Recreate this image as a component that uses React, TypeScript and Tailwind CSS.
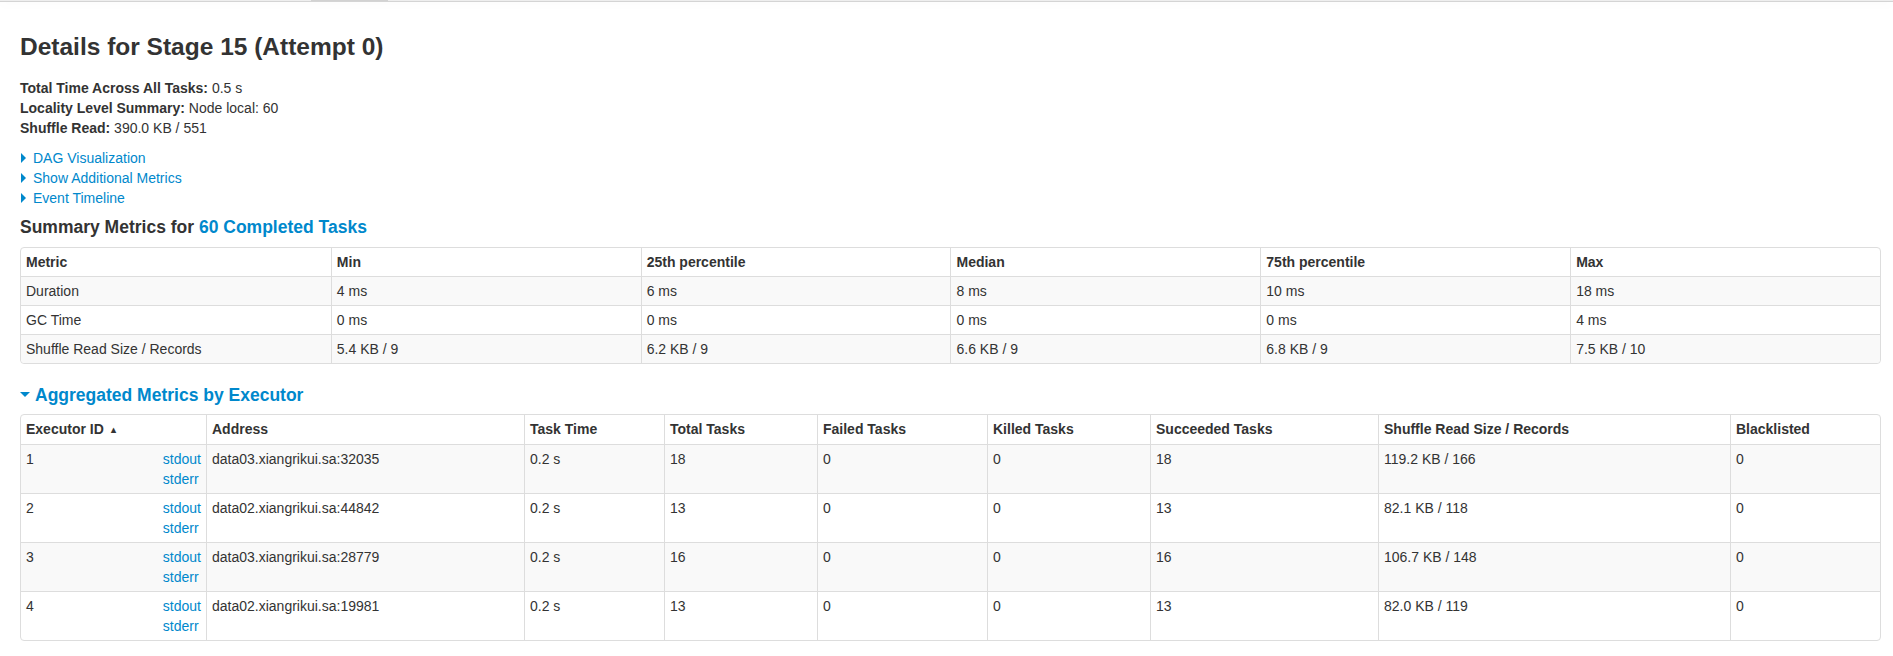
import React from 'react';

const summaryRows = [
  ['Duration', '4 ms', '6 ms', '8 ms', '10 ms', '18 ms'],
  ['GC Time', '0 ms', '0 ms', '0 ms', '0 ms', '4 ms'],
  ['Shuffle Read Size / Records', '5.4 KB / 9', '6.2 KB / 9', '6.6 KB / 9', '6.8 KB / 9', '7.5 KB / 10'],
];

const executors = [
  { id: '1', address: 'data03.xiangrikui.sa:32035', taskTime: '0.2 s', total: '18', failed: '0', killed: '0', succeeded: '18', shuffle: '119.2 KB / 166', blacklisted: '0' },
  { id: '2', address: 'data02.xiangrikui.sa:44842', taskTime: '0.2 s', total: '13', failed: '0', killed: '0', succeeded: '13', shuffle: '82.1 KB / 118', blacklisted: '0' },
  { id: '3', address: 'data03.xiangrikui.sa:28779', taskTime: '0.2 s', total: '16', failed: '0', killed: '0', succeeded: '16', shuffle: '106.7 KB / 148', blacklisted: '0' },
  { id: '4', address: 'data02.xiangrikui.sa:19981', taskTime: '0.2 s', total: '13', failed: '0', killed: '0', succeeded: '13', shuffle: '82.0 KB / 119', blacklisted: '0' },
];

// bootstrap-ish bordered + striped table cell
const cell = 'border-l border-t border-[#ddd] first:border-l-0 px-[5px] py-[4px] text-left align-top leading-[20px]';
const headCell = 'border-l border-[#ddd] first:border-l-0 px-[5px] py-[4px] text-left align-top leading-[20px] font-bold';
const tableCls =
  'w-full table-fixed border-separate border-spacing-0 border border-[#ddd] rounded-[4px] [&_tbody_tr:nth-child(odd)_td]:bg-[#f9f9f9] [&_tbody_tr:last-child_td:first-child]:rounded-bl-[4px] [&_tbody_tr:last-child_td:last-child]:rounded-br-[4px]';

function ArrowClosed() {
  return <span className="inline-block w-0 h-0 border-y-[5px] border-y-transparent border-l-[5px] border-l-[#0088cc] align-[-1px]" />;
}

function ArrowOpen() {
  return <span className="inline-block w-0 h-0 border-x-[5px] border-x-transparent border-t-[5px] border-t-[#0088cc] mb-[2px]" />;
}

export default function App() {
  return (
    <div className="min-h-[656px] bg-white text-[#333] text-[14px] leading-[20px]" style={{ fontFamily: '"Liberation Sans", Arial, Helvetica, sans-serif' }}>
      {/* navbar bottom edge */}
      <div className="shadow-[0_2px_10px_rgba(0,0,0,0.05)]">
        <div className="h-[1px] bg-[#eeeeee] flex">
          <div className="ml-[311px] w-[77px] bg-[#d2d2d2]" />
        </div>
        <div className="h-[1px] bg-[#d4d4d4]" />
      </div>

      <div className="pl-[20px] pr-[12px]">
        <h3 className="mt-[25px] mb-[11px] text-[24.5px] leading-[40px] font-bold">Details for Stage 15 (Attempt 0)</h3>

        <ul className="mb-[10px]">
          <li>
            <strong>Total Time Across All Tasks:</strong> 0.5 s
          </li>
          <li>
            <strong>Locality Level Summary:</strong> Node local: 60
          </li>
          <li>
            <strong>Shuffle Read:</strong> 390.0 KB / 551
          </li>
        </ul>

        <div className="mb-[9px] pl-[1px]">
          {['DAG Visualization', 'Show Additional Metrics', 'Event Timeline'].map((t) => (
            <div key={t} className="flex items-center">
              <ArrowClosed />
              <a className="ml-[7px] text-[#0088cc] cursor-pointer">{t}</a>
            </div>
          ))}
        </div>

        <h4 className="mb-[10px] text-[17.5px] leading-[20px] font-bold">
          Summary Metrics for <a className="text-[#0088cc]">60 Completed Tasks</a>
        </h4>

        <table className={tableCls}>
          <thead>
            <tr>
              {['Metric', 'Min', '25th percentile', 'Median', '75th percentile', 'Max'].map((h) => (
                <th key={h} className={headCell}>
                  {h}
                </th>
              ))}
            </tr>
          </thead>
          <tbody>
            {summaryRows.map((r) => (
              <tr key={r[0]}>
                {r.map((v, i) => (
                  <td key={i} className={cell}>
                    {v}
                  </td>
                ))}
              </tr>
            ))}
          </tbody>
        </table>

        <h4 className="mt-[21px] mb-[9px] text-[17.5px] leading-[20px] font-bold text-[#0088cc] flex items-center">
          <ArrowOpen />
          <a className="ml-[5px]">Aggregated Metrics by Executor</a>
        </h4>

        <table className={tableCls}>
          <thead>
            <tr>
              <th className={`${headCell} w-[185px]`}>
                Executor ID
                <span className="ml-[7px] text-[11px] align-[1px]" style={{ fontFamily: '"DejaVu Sans", sans-serif' }}>
                  ▴
                </span>
              </th>
              <th className={`${headCell} w-[318px]`}>Address</th>
              <th className={`${headCell} w-[140px]`}>Task Time</th>
              <th className={`${headCell} w-[153px]`}>Total Tasks</th>
              <th className={`${headCell} w-[170px]`}>Failed Tasks</th>
              <th className={`${headCell} w-[163px]`}>Killed Tasks</th>
              <th className={`${headCell} w-[228px]`}>Succeeded Tasks</th>
              <th className={`${headCell} w-[352px]`}>Shuffle Read Size / Records</th>
              <th className={headCell}>Blacklisted</th>
            </tr>
          </thead>
          <tbody>
            {executors.map((e) => (
              <tr key={e.id}>
                <td className={cell}>
                  <div className="flex justify-between">
                    <span>{e.id}</span>
                    <div className="text-[#0088cc]">
                      <div>stdout</div>
                      <div>stderr</div>
                    </div>
                  </div>
                </td>
                <td className={cell}>{e.address}</td>
                <td className={cell}>{e.taskTime}</td>
                <td className={cell}>{e.total}</td>
                <td className={cell}>{e.failed}</td>
                <td className={cell}>{e.killed}</td>
                <td className={cell}>{e.succeeded}</td>
                <td className={cell}>{e.shuffle}</td>
                <td className={cell}>{e.blacklisted}</td>
              </tr>
            ))}
          </tbody>
        </table>
      </div>
    </div>
  );
}
